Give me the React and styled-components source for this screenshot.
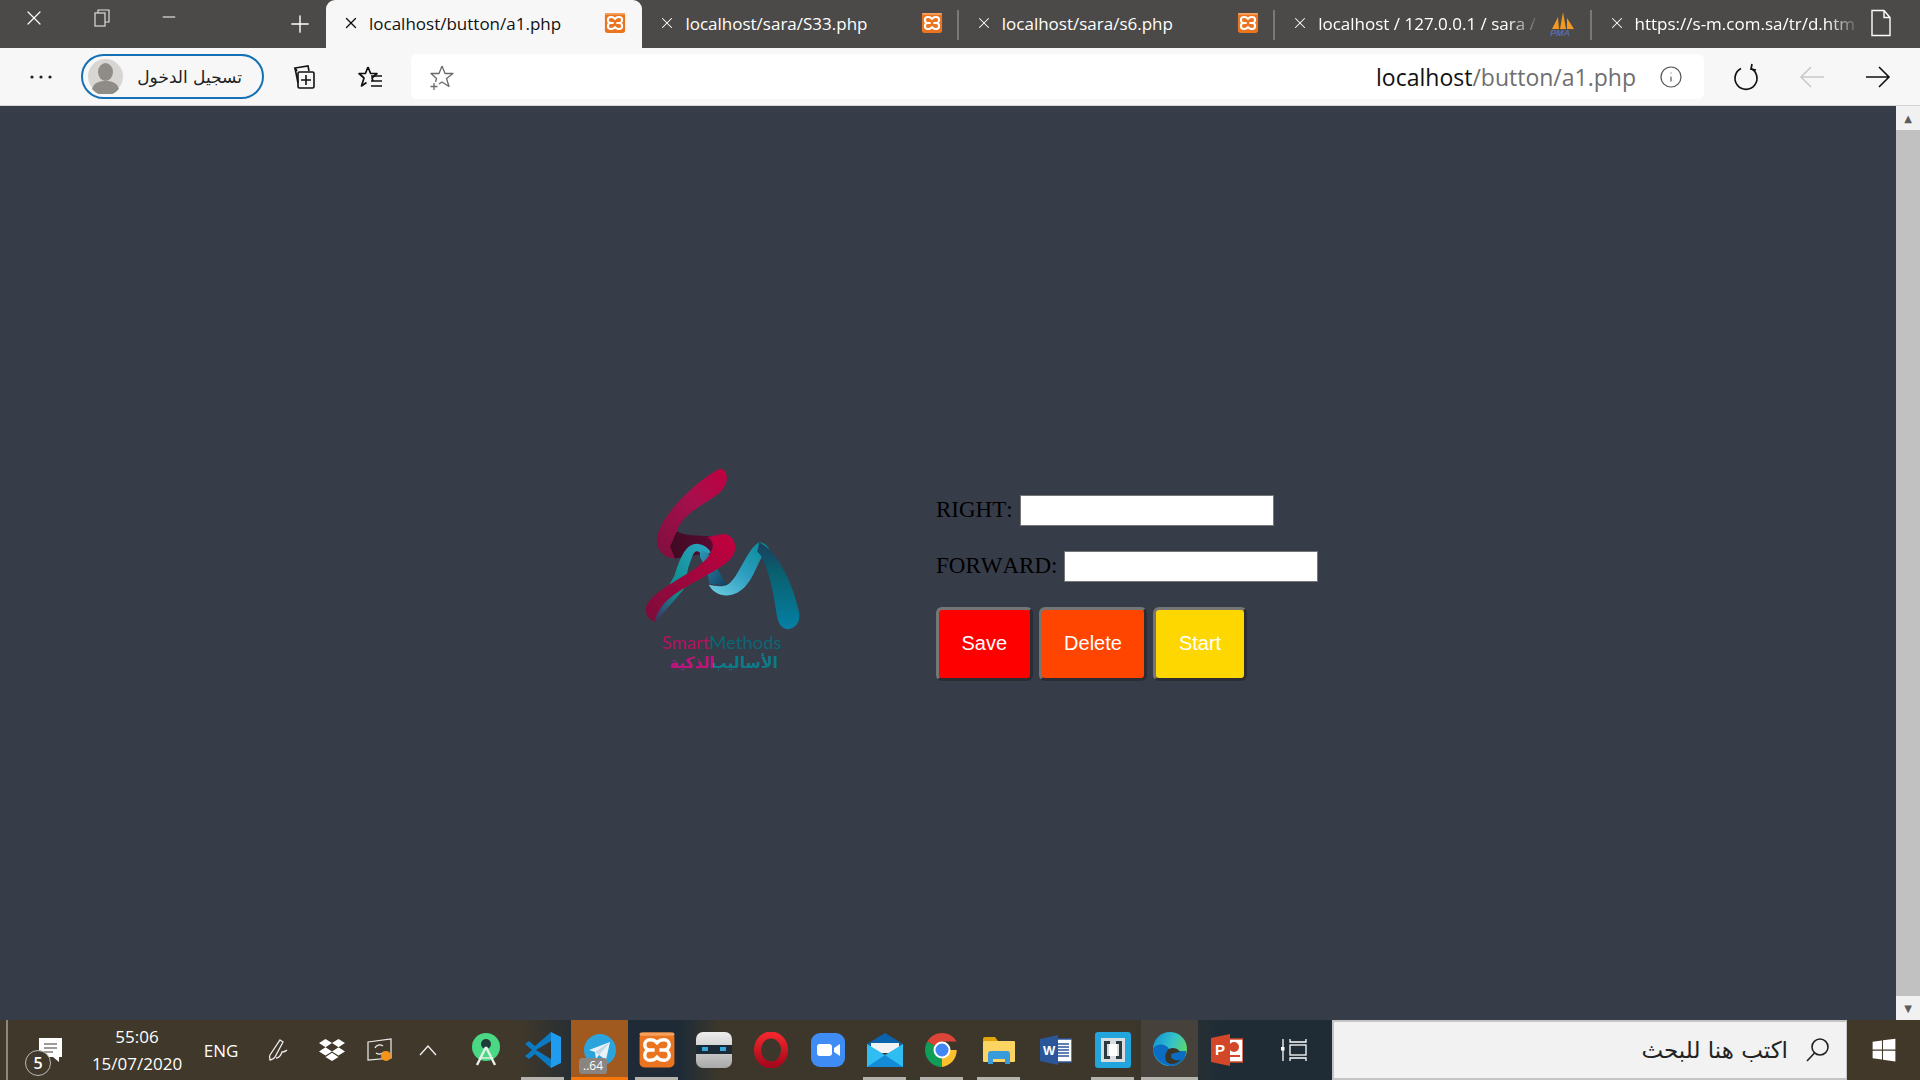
import React from "react";
import styled, { createGlobalStyle } from "styled-components";
import { X, Plus, Minus, Info } from "lucide-react";
import { FaDropbox, FaWindows } from "react-icons/fa";

const GlobalStyle = createGlobalStyle`
  html, body {
    margin: 0;
    padding: 0;
    width: 1920px;
    height: 1080px;
    overflow: hidden;
    font-family: "Open Sans", "DejaVu Sans", sans-serif;
  }
`;

const Screen = styled.div`
  display: flex;
  flex-direction: column;
  width: 1920px;
  height: 1080px;
`;

/* tab strip */
const TabStrip = styled.div`
  display: flex;
  height: 48px;
  background: #4c4a48;
  color: #fff;
`;
const WindowControls = styled.div`
  display: flex;
  width: 326px;
`;
const WinButton = styled.div`
  display: flex;
  justify-content: center;
  padding-top: ${(p) => p.$top || 8}px;
  width: ${(p) => p.$w || 68}px;
  margin-left: ${(p) => p.$ml || 0}px;
  height: 48px;
  box-sizing: border-box;
`;
const Tab = styled.div`
  position: relative;
  display: flex;
  align-items: center;
  gap: 9px;
  width: 316.4px;
  height: 48px;
  box-sizing: border-box;
  padding: 0 16px 2px 16px;
  background: ${(p) => (p.$active ? "#f7f7f7" : "transparent")};
  color: ${(p) => (p.$active ? "#111" : "#fff")};
  border-radius: ${(p) => (p.$active ? "9px 9px 0 0" : "0")};
  &::after {
    content: "";
    display: ${(p) => (p.$sep ? "block" : "none")};
    position: absolute;
    right: 0;
    top: 10px;
    width: 2px;
    height: 30px;
    background: #7a7876;
  }
`;
const TabTitle = styled.span`
  flex: 1;
  overflow: hidden;
  white-space: nowrap;
  font-size: 17px;
  -webkit-mask-image: ${(p) =>
    p.$fade ? "linear-gradient(to right, #000 85%, transparent 100%)" : "none"};
`;

/* toolbar */
const Toolbar = styled.div`
  display: flex;
  align-items: center;
  height: 58px;
  box-sizing: border-box;
  background: #f7f7f7;
  border-bottom: 1px solid #d6d6d6;
`;
const ToolCell = styled.div`
  display: flex;
  align-items: center;
  justify-content: center;
  width: ${(p) => p.$w || 66}px;
  flex: none;
`;
const SignIn = styled.div`
  display: flex;
  align-items: center;
  justify-content: space-between;
  width: 183px;
  height: 45px;
  box-sizing: border-box;
  border: 2px solid #1571b5;
  border-radius: 23px;
  padding: 0 20px 0 5px;
  margin-right: 7px;
  flex: none;
`;
const SignInText = styled.span`
  font-family: "DejaVu Sans", sans-serif;
  font-size: 17px;
  color: #222;
`;
const Address = styled.div`
  display: flex;
  align-items: center;
  width: 1293px;
  height: 45px;
  box-sizing: border-box;
  background: #fff;
  border-radius: 6px;
  padding: 0 21px 0 17px;
  margin-right: 9px;
  flex: none;
`;
const UrlText = styled.div`
  margin-left: auto;
  margin-right: 23px;
  font-size: 23px;
  color: #6f6f6f;
  white-space: nowrap;
`;
const UrlHost = styled.span`
  color: #111;
`;

/* page */
const Main = styled.div`
  display: flex;
  flex: 1;
  min-height: 0;
`;
const Content = styled.div`
  display: flex;
  align-items: flex-start;
  flex: 1;
  background: #373c49;
  padding: 362px 0 0 644px;
`;
const Logo = styled.svg`
  width: 156px;
  height: 203px;
  flex: none;
`;
const Form = styled.div`
  display: flex;
  flex-direction: column;
  gap: 25px;
  margin: 27px 0 0 136px;
`;
const Field = styled.div`
  display: flex;
  align-items: center;
  gap: 7px;
  height: 31px;
`;
const Label = styled.label`
  font-family: "Liberation Serif", serif;
  font-size: 23px;
  font-kerning: none;
  color: #000;
  margin-top: -2px;
`;
const TextInput = styled.input`
  width: 254px;
  height: 31px;
  box-sizing: border-box;
  border: 1px solid #767676;
  background: #fff;
  padding: 0;
`;
const ButtonRow = styled.div`
  display: flex;
  gap: 6px;
`;
const ActionButton = styled.button`
  height: 74px;
  box-sizing: border-box;
  padding: 0 22.5px 2px;
  border: 3px solid;
  border-color: #767676 #2b2d33 #2b2d33 #767676;
  border-radius: 6px;
  background: ${(p) => p.$color};
  color: #fff;
  font-family: "Liberation Sans", sans-serif;
  font-size: 20px;
`;

/* scrollbar */
const Scrollbar = styled.div`
  display: flex;
  flex-direction: column;
  align-items: center;
  width: 24px;
  background: #f1f1f1;
`;
const ScrollArrow = styled.div`
  height: 24px;
  flex: none;
  display: flex;
  align-items: center;
  justify-content: center;
  color: #5c5c5c;
  font-size: 10px;
`;
const ScrollThumb = styled.div`
  flex: 1;
  width: 100%;
  background: #c1c1c1;
`;

/* taskbar */
const Taskbar = styled.div`
  display: flex;
  height: 60px;
  background: linear-gradient(
    to right,
    #40382b 0,
    #40382b 520px,
    #1e2b36 590px,
    #1e2b36 680px,
    #3d372b 720px,
    #3d372b 1130px,
    #1f2c36 1220px,
    #1f2c36 1332px
  );
  color: #fff;
`;
const Tray = styled.div`
  display: flex;
  width: 451px;
  flex: none;
  margin-left: 6px;
  border-left: 2px solid #8d887e;
  box-sizing: border-box;
`;
const TrayCell = styled.div`
  position: relative;
  display: flex;
  align-items: center;
  justify-content: center;
  width: ${(p) => p.$w}px;
  flex: none;
  margin-left: ${(p) => p.$ml || 0}px;
`;
const NotifyBadge = styled.div`
  position: absolute;
  left: 11px;
  top: 30px;
  width: 24px;
  height: 24px;
  border: 1px solid #bbb;
  border-radius: 50%;
  background: #40382b;
  display: flex;
  align-items: center;
  justify-content: center;
  font-size: 16px;
  font-weight: 600;
`;
const Clock = styled.div`
  display: flex;
  flex-direction: column;
  align-items: center;
  gap: 6px;
  font-size: 17px;
  line-height: 21px;
`;
const Lang = styled.span`
  font-size: 17px;
`;
const AppCell = styled.div`
  position: relative;
  display: flex;
  align-items: center;
  justify-content: center;
  width: ${(p) => p.$w || 57}px;
  flex: none;
  background: ${(p) => p.$bg || "transparent"};
  &::after {
    content: "";
    display: ${(p) => (p.$bar ? "block" : "none")};
    position: absolute;
    bottom: 0;
    left: ${(p) => (p.$full ? "0" : "7px")};
    right: ${(p) => (p.$full ? "0" : "7px")};
    height: 3px;
    background: ${(p) => p.$bar};
  }
`;
const TelegramBadge = styled.div`
  position: absolute;
  left: 8px;
  bottom: 6px;
  padding: 0 4px;
  border-radius: 3px;
  background: #8a8581;
  font-size: 12px;
  line-height: 16px;
`;
const SearchBox = styled.div`
  display: flex;
  align-items: center;
  justify-content: flex-end;
  gap: 17px;
  width: 515px;
  flex: none;
  box-sizing: border-box;
  padding: 0 15px 0 0;
  background: #f2f2f2;
  border: 2px solid #c4c4c4;
  border-right-width: 1px;
  color: #222;
`;
const SearchText = styled.span`
  font-family: "DejaVu Sans", sans-serif;
  font-size: 23px;
`;
const StartCell = styled.div`
  display: flex;
  align-items: center;
  justify-content: center;
  flex: 1;
  background: #41382a;
`;

/* drawings */
const Xampp = ({ size = 22 }) => (
  <svg width={size} height={size} viewBox="0 0 24 24" style={{ flex: "none" }}>
    <rect x="1" y="1" width="22" height="22" rx="3" fill="#ea7420" />
    <rect x="1" y="1" width="22" height="2" rx="1" fill="#f5a05c" />
    <path
      d="M11 6.500C10 5.500 9 5.500 7.500 5.500a3.250 3.250 0 0 0 0 6.500 3.250 3.250 0 0 0 0 6.500C9 18.500 10 18.500 11 17.500L12 16.500 13 17.500C14 18.500 15 18.500 16.500 18.500a3.250 3.250 0 0 0 0-6.500 3.250 3.250 0 0 0 0-6.500C15 5.500 14 5.500 13 6.500L12 7.500zM7.500 12h3M13.500 12h3"
      fill="none"
      stroke="#fff"
      strokeWidth="2.200"
    />
  </svg>
);
const Pma = () => (
  <svg width="26" height="28" viewBox="0 0 26 28" style={{ flex: "none" }}>
    <path d="M2 20 8 8l1 12zM10 20l3-17 3 17zM17 20l0-11 7 11z" fill="#f2991f" />
    <text x="0" y="27" fontSize="9" fontStyle="italic" fontWeight="700" fontFamily="Liberation Sans" fill="#5a6aa8">
      PMA
    </text>
  </svg>
);
const DocIcon = () => (
  <svg width="22" height="28" viewBox="0 0 22 28" fill="none" stroke="#fff" strokeWidth="1.400" style={{ flex: "none" }}>
    <path d="M2 1.500h12l6 7v18H2zM14 1.500v7h6" />
  </svg>
);
const Restore = () => (
  <svg width="16" height="18" viewBox="0 0 16 18" fill="none" stroke="#ddd" strokeWidth="1.200">
    <rect x="1" y="4" width="10" height="13" />
    <path d="M4 4V1h11v12h-4" />
  </svg>
);
const Dots = () => (
  <svg width="24" height="6" viewBox="0 0 24 6" fill="#222">
    <circle cx="3" cy="3" r="1.600" />
    <circle cx="12" cy="3" r="1.600" />
    <circle cx="21" cy="3" r="1.600" />
  </svg>
);
const Avatar = () => (
  <svg width="35" height="35" viewBox="0 0 35 35" style={{ flex: "none" }}>
    <circle cx="17.500" cy="17.500" r="17.500" fill="#d8d6d3" />
    <ellipse cx="17.500" cy="13" rx="7.500" ry="9" fill="#8f8c88" />
    <path d="M4 30c2-7 8-8 13.500-8S29 23 31 30a17.500 17.500 0 0 1-27 0z" fill="#8f8c88" />
  </svg>
);
const Collections = () => (
  <svg width="24" height="26" viewBox="0 0 24 26" fill="none" stroke="#111" strokeWidth="1.600">
    <path d="M5 7 3 4l13-2 1 5" />
    <path d="M3 4l3 15" />
    <rect x="6" y="8" width="16" height="16" rx="1.500" />
    <path d="M14 11v10M9 16h10" />
  </svg>
);
const Favorites = () => (
  <svg width="26" height="24" viewBox="0 0 26 24" fill="none" stroke="#111" strokeWidth="1.700">
    <path d="M11 2l2.600 6.500H20l-5 4.500 1 3M11 2 8.400 8.500H2l5 4.500-2.500 8 5-3.500" strokeLinejoin="round" />
    <path d="M14 11h11M14 16h11M14 21h11" />
  </svg>
);
const AddStar = () => (
  <svg width="26" height="26" viewBox="0 0 26 26" fill="none" stroke="#6a6a6a" strokeWidth="1.300" style={{ flex: "none" }}>
    <path d="M14 2l3 7.500h8l-6.500 5 2.500 8-7-4.500-3 2M14 2l-3 7.500H3l5.500 5-1 3.500" strokeLinejoin="round" />
    <path d="M6 19v7M2.500 22.500h7" />
  </svg>
);
const Reload = () => (
  <svg width="26" height="28" viewBox="0 0 26 28" fill="none" stroke="#111" strokeWidth="1.700">
    <path d="M8 5.500a11 11 0 1 0 10 0" />
    <path d="M19 1l-1 5 5 1" />
  </svg>
);
const Arrow = ({ color, flip }) => (
  <svg
    width="26"
    height="24"
    viewBox="0 0 26 24"
    fill="none"
    stroke={color}
    strokeWidth="1.600"
    style={{ transform: flip ? "scaleX(-1)" : "none" }}
  >
    <path d="M1 12h23M14 2l10 10-10 10" />
  </svg>
);
const Notes = () => (
  <svg width="26" height="26" viewBox="0 0 26 26">
    <path d="M2 1h23v19h-3v5l-6-5H2z" fill="#fff" />
    <path d="M7 7h13M7 11h13M7 15h9" stroke="#40382b" strokeWidth="1.200" />
  </svg>
);
const Pen = () => (
  <svg width="22" height="24" viewBox="0 0 22 24" fill="none" stroke="#eee" strokeWidth="1.300">
    <path d="M13 2l3 2-8 15c-1 2-5 3-5 3s-1-3 0-5zM9 20c3 0 5-3 6-6 2 0 4-1 5-2" />
  </svg>
);
const RemoteIcon = () => (
  <svg width="26" height="24" viewBox="0 0 26 24" fill="none" stroke="#eee" strokeWidth="1.200">
    <path d="M1 4l23-3v19l-23 2z" />
    <path d="M8 10c1-3 5-4 8-2M17 14c-2 2-5 3-8 1" />
    <circle cx="19" cy="18" r="5" fill="#f7931a" stroke="none" />
  </svg>
);
const Chevron = () => (
  <svg width="20" height="12" viewBox="0 0 20 12" fill="none" stroke="#eee" strokeWidth="1.400">
    <path d="M2 11l8-9 8 9" />
  </svg>
);
const AndroidStudio = () => (
  <svg width="30" height="34" viewBox="0 0 30 34">
    <circle cx="15" cy="14" r="14" fill="#4ad884" />
    <circle cx="15" cy="11" r="5" fill="#1f3a3a" />
    <path d="M15 14 6 32M15 14l9 18" stroke="#e8f0ea" strokeWidth="2.400" fill="none" />
    <path d="M8 25h14" stroke="#e8f0ea" strokeWidth="1.400" />
  </svg>
);
const VsCode = () => (
  <svg width="36" height="36" viewBox="0 0 36 36">
    <path d="M26 0l10 5v26l-10 5z" fill="#1f9cf0" />
    <path d="M26 0v9L11 18l15 9v9L10 22l-6 5-4-3 7-6-7-6 4-3 6 5z" fill="#0a7ac2" />
  </svg>
);
const Telegram = () => (
  <svg width="32" height="32" viewBox="0 0 32 32">
    <circle cx="16" cy="16" r="16" fill="#2ba3dd" />
    <path d="M5 16 26 8l-4 18-7-5-3 4-1-7z" fill="#e8f2f8" />
    <path d="M11 18 26 8 15 21z" fill="#c4d8e6" />
  </svg>
);
const Ninja = () => (
  <svg width="36" height="36" viewBox="0 0 36 36">
    <defs>
      <linearGradient id="ninjaFill" x1="0" y1="0" x2="0" y2="1">
        <stop offset="0" stopColor="#eeeeee" />
        <stop offset="1" stopColor="#a9a9a9" />
      </linearGradient>
    </defs>
    <rect width="36" height="36" rx="7" fill="url(#ninjaFill)" />
    <rect y="13" width="36" height="9" fill="#1b2a36" />
    <rect x="6" y="15" width="6" height="4" fill="#35a8dc" />
    <rect x="24" y="15" width="6" height="4" fill="#35a8dc" />
  </svg>
);
const Opera = () => (
  <svg width="36" height="36" viewBox="0 0 36 36">
    <defs>
      <linearGradient id="operaFill" x1="0" y1="0" x2="0" y2="1">
        <stop offset="0" stopColor="#f0262c" />
        <stop offset="1" stopColor="#a8081c" />
      </linearGradient>
    </defs>
    <ellipse cx="18" cy="18" rx="13.500" ry="15" fill="none" stroke="url(#operaFill)" strokeWidth="7" />
  </svg>
);
const ZoomApp = () => (
  <svg width="34" height="34" viewBox="0 0 34 34">
    <rect width="34" height="34" rx="9" fill="#3f8cf5" />
    <rect x="6" y="11" width="15" height="12" rx="3" fill="#fff" />
    <path d="M23 15l6-4v12l-6-4z" fill="#fff" />
  </svg>
);
const Mail = () => (
  <svg width="36" height="34" viewBox="0 0 36 34">
    <path d="M0 11 18 0l18 11v3H0z" fill="#0b62ad" />
    <path d="M4 10h28v10H4z" fill="#f2f2f2" />
    <path d="M0 11l18 11 18-11v23H0z" fill="#2fbdf2" />
    <path d="M0 34l18-12 18 12z" fill="#158bd8" />
  </svg>
);
const Chrome = () => (
  <svg width="34" height="34" viewBox="0 0 34 34">
    <path d="M17 17 2.300 8.500A17 17 0 0 1 31.700 8.500H17z" fill="#db4437" />
    <path d="M17 17H31.700A17 17 0 0 1 17 34z" fill="#fbc02d" />
    <path d="M17 17v17A17 17 0 0 1 2.300 8.500z" fill="#0f9d58" />
    <circle cx="17" cy="17" r="7.500" fill="#4285f4" stroke="#fff" strokeWidth="2" />
  </svg>
);
const Explorer = () => (
  <svg width="32" height="27" viewBox="0 0 32 27">
    <path d="M0 2a2 2 0 0 1 2-2h10l3 4H0z" fill="#e2a40c" />
    <rect y="4" width="32" height="21" rx="1" fill="#fcd462" />
    <path d="M5 27V17a3 3 0 0 1 3-3h16a3 3 0 0 1 3 3v10h-5v-5H10v5z" fill="#3a9bdc" />
  </svg>
);
const Word = () => (
  <svg width="32" height="30" viewBox="0 0 32 30">
    <rect x="14" y="4" width="18" height="23" fill="#fff" stroke="#2b579a" strokeWidth="1.500" />
    <path d="M18 9h11M18 12h11M18 15h11M18 18h11M18 21h11" stroke="#2b579a" strokeWidth="1.400" />
    <path d="M0 4 18 0v30L0 26z" fill="#2b579a" />
    <text x="3" y="20" fontSize="13" fontWeight="700" fontFamily="Liberation Sans" fill="#fff">W</text>
  </svg>
);
const Brackets = () => (
  <svg width="36" height="36" viewBox="0 0 36 36">
    <rect width="36" height="36" rx="3" fill="#22a4dc" />
    <rect x="6" y="6" width="24" height="24" fill="#d9dde0" />
    <path d="M15 9H9v18h6v-3h-3V12h3zM21 9h6v18h-6v-3h3V12h-3z" fill="#2c3a42" />
    <rect x="14" y="12" width="8" height="12" fill="#fff" />
  </svg>
);
const Edge = () => (
  <svg width="36" height="36" viewBox="0 0 36 36">
    <defs>
      <linearGradient id="edgeFill" x1="0" y1="0" x2="1" y2="0.400">
        <stop offset="0" stopColor="#0c8fd8" />
        <stop offset="0.600" stopColor="#35c2c9" />
        <stop offset="1" stopColor="#5ad66e" />
      </linearGradient>
    </defs>
    <circle cx="18" cy="17" r="17" fill="url(#edgeFill)" />
    <path d="M1 17c3-6 13-6 16 0 1 3 6 3 10 2l7 0c0 4-1 7-4 10-5 5-12 6-16 4C7 31 2 25 1 17z" fill="#0b6cc4" />
    <path d="M15 19c3-5 11-3 13 1-6 1-9 1-9 4s4 5 10 4c-6 5-12 5-15 1-1-3-1-7 1-10z" fill="#383528" />
  </svg>
);
const Powerpoint = () => (
  <svg width="32" height="32" viewBox="0 0 32 32">
    <rect x="14" y="5" width="18" height="23" fill="#fff" stroke="#d2472a" strokeWidth="1.500" />
    <circle cx="23" cy="13" r="5" fill="#d2472a" />
    <path d="M18 22h11" stroke="#d2472a" strokeWidth="2" />
    <path d="M0 4 19 0v32L0 28z" fill="#d2472a" />
    <text x="4" y="21" fontSize="15" fontWeight="700" fontFamily="Liberation Sans" fill="#fff">P</text>
  </svg>
);
const TaskView = () => (
  <svg width="26" height="24" viewBox="0 0 26 24" fill="none" stroke="#fff" strokeWidth="1.300">
    <path d="M2 1v22" />
    <rect x="0" y="9" width="3.500" height="3.500" fill="#fff" stroke="none" />
    <path d="M9 1v3h16V1M9 23v-3h16v3" />
    <rect x="9" y="7" width="16" height="10" />
  </svg>
);
const SearchIcon = () => (
  <svg width="26" height="26" viewBox="0 0 26 26" fill="none" stroke="#222" strokeWidth="1.600">
    <circle cx="15" cy="10" r="8" />
    <path d="M9.500 16 2 24" />
  </svg>
);

const SmartMethodsLogo = () => (
  <Logo viewBox="72 54 468 610">
    <defs>
      <linearGradient id="redBand" x1="0" y1="1" x2="1" y2="0">
        <stop offset="0" stopColor="#7d0f3d" />
        <stop offset="0.600" stopColor="#a80f4c" />
        <stop offset="1" stopColor="#c0003f" />
      </linearGradient>
      <linearGradient id="redLower" x1="0" y1="1" x2="1" y2="0">
        <stop offset="0" stopColor="#7b0d3b" />
        <stop offset="1" stopColor="#c4003f" />
      </linearGradient>
      <linearGradient id="foldDark" x1="0" y1="0" x2="1" y2="0">
        <stop offset="0" stopColor="#3e0a22" />
        <stop offset="1" stopColor="#5c0a33" />
      </linearGradient>
      <linearGradient id="tealStem" x1="0" y1="1" x2="1" y2="0">
        <stop offset="0" stopColor="#462a62" />
        <stop offset="0.400" stopColor="#0f8d8f" />
        <stop offset="1" stopColor="#2ba6c4" />
      </linearGradient>
      <linearGradient id="mRibbon" x1="0" y1="1" x2="1" y2="0">
        <stop offset="0" stopColor="#6fd0e2" />
        <stop offset="0.500" stopColor="#2e9dc0" />
        <stop offset="1" stopColor="#048a93" />
      </linearGradient>
      <linearGradient id="mLeg" x1="0" y1="0" x2="0" y2="1">
        <stop offset="0" stopColor="#1b3d5e" />
        <stop offset="0.350" stopColor="#09606f" />
        <stop offset="1" stopColor="#0580a4" />
      </linearGradient>
      <linearGradient id="mDip" x1="0" y1="0" x2="1" y2="1">
        <stop offset="0" stopColor="#2b97b5" />
        <stop offset="1" stopColor="#123f63" />
      </linearGradient>
    </defs>
    <path d="M170 245C205 262 250 255 290 262L272 308L165 326C148 318 141 304 146 290z" fill="url(#foldDark)" />
    <path d="M163 378C178 330 195 284 226 282C246 281 264 292 272 308L247 318C236 300 226 300 218 316L205 352L190 420C160 455 130 490 105 515C92 508 95 490 110 470z" fill="url(#tealStem)" />
    <path d="M240 306C254 298 268 310 280 338L322 408L268 402C266 372 250 340 240 322z" fill="url(#mDip)" />
    <path d="M266 405C290 410 310 412 325 403C355 385 385 290 418 278C432 276 442 288 448 298C420 310 410 370 380 405C350 445 290 450 266 405z" fill="url(#mRibbon)" />
    <path d="M418 278C470 300 520 400 538 490C542 525 520 540 498 538C478 532 472 510 468 480C458 410 440 330 412 306z" fill="url(#mLeg)" />
    <path d="M300 56C326 58 328 100 302 125C262 160 185 190 170 245L150 290L165 326C132 325 108 300 110 270C115 200 230 90 300 56z" fill="url(#redBand)" />
    <path d="M262 262C285 258 305 250 320 254C345 262 354 295 336 322C300 368 170 410 125 470C110 490 106 505 105 515C85 510 70 490 80 465C110 410 230 370 265 320C285 292 282 274 262 262z" fill="url(#redLower)" />
    <text x="125" y="597" fontFamily="Lato, sans-serif" fontWeight="400" fontSize="51" textLength="360" lengthAdjust="spacingAndGlyphs">
      <tspan fill="#b2125f">Smart</tspan>
      <tspan fill="#0b6675">Methods</tspan>
    </text>
    <text x="474" y="655" textAnchor="start" direction="rtl" fontFamily="DejaVu Sans, sans-serif" fontWeight="700" fontSize="47" fill="#0d7a88">
      الأساليب
    </text>
    <text x="284" y="655" textAnchor="start" direction="rtl" fontFamily="DejaVu Sans, sans-serif" fontWeight="700" fontSize="47" fill="#c3127a">
      الذكية
    </text>
  </Logo>
);

const App = () => {
  return (
    <Screen>
      <GlobalStyle />
      <TabStrip>
        <WindowControls>
          <WinButton $top={6}><X size={24} strokeWidth={1.2} /></WinButton>
          <WinButton $top={9}><Restore /></WinButton>
          <WinButton $top={7}><Minus size={20} strokeWidth={1.2} /></WinButton>
          <WinButton $w={52} $ml={71} $top={10}><Plus size={28} strokeWidth={1.2} /></WinButton>
        </WindowControls>
        <Tab $active>
          <X size={18} strokeWidth={1.8} style={{ flex: "none" }} />
          <TabTitle>localhost/button/a1.php</TabTitle>
          <Xampp />
        </Tab>
        <Tab $sep>
          <X size={18} strokeWidth={1.4} style={{ flex: "none" }} />
          <TabTitle>localhost/sara/S33.php</TabTitle>
          <Xampp />
        </Tab>
        <Tab $sep>
          <X size={18} strokeWidth={1.4} style={{ flex: "none" }} />
          <TabTitle>localhost/sara/s6.php</TabTitle>
          <Xampp />
        </Tab>
        <Tab $sep>
          <X size={18} strokeWidth={1.4} style={{ flex: "none" }} />
          <TabTitle $fade>localhost / 127.0.0.1 / sara /</TabTitle>
          <Pma />
        </Tab>
        <Tab>
          <X size={18} strokeWidth={1.4} style={{ flex: "none" }} />
          <TabTitle $fade>https://s-m.com.sa/tr/d.htm</TabTitle>
          <DocIcon />
        </Tab>
      </TabStrip>

      <Toolbar>
        <ToolCell $w={81}><Dots /></ToolCell>
        <SignIn>
          <Avatar />
          <SignInText dir="rtl">تسجيل الدخول</SignInText>
        </SignIn>
        <ToolCell><Collections /></ToolCell>
        <ToolCell><Favorites /></ToolCell>
        <ToolCell $w={8} />
        <Address>
          <AddStar />
          <UrlText><UrlHost>localhost</UrlHost>/button/a1.php</UrlText>
          <Info size={24} strokeWidth={1.2} color="#555" />
        </Address>
        <ToolCell><Reload /></ToolCell>
        <ToolCell><Arrow color="#c9c9c9" flip /></ToolCell>
        <ToolCell><Arrow color="#111" /></ToolCell>
      </Toolbar>

      <Main>
        <Content>
          <SmartMethodsLogo />
          <Form>
            <Field>
              <Label>RIGHT:</Label>
              <TextInput type="text" />
            </Field>
            <Field>
              <Label>FORWARD:</Label>
              <TextInput type="text" />
            </Field>
            <ButtonRow>
              <ActionButton $color="#ff0000">Save</ActionButton>
              <ActionButton $color="#ff4500">Delete</ActionButton>
              <ActionButton $color="#ffd700">Start</ActionButton>
            </ButtonRow>
          </Form>
        </Content>
        <Scrollbar>
          <ScrollArrow>▲</ScrollArrow>
          <ScrollThumb />
          <ScrollArrow>▼</ScrollArrow>
        </Scrollbar>
      </Main>

      <Taskbar>
        <Tray>
          <TrayCell $w={72} $ml={6}>
            <Notes />
            <NotifyBadge>5</NotifyBadge>
          </TrayCell>
          <TrayCell $w={102}>
            <Clock>
              <span>55:06</span>
              <span>15/07/2020</span>
            </Clock>
          </TrayCell>
          <TrayCell $w={66}><Lang>ENG</Lang></TrayCell>
          <TrayCell $w={48}><Pen /></TrayCell>
          <TrayCell $w={60}><FaDropbox size={26} color="#fff" /></TrayCell>
          <TrayCell $w={36}><RemoteIcon /></TrayCell>
          <TrayCell $w={59}><Chevron /></TrayCell>
        </Tray>
        <AppCell><AndroidStudio /></AppCell>
        <AppCell $bar="#b5b3ae"><VsCode /></AppCell>
        <AppCell $bg="#a05a1f" $bar="#f7760b" $full>
          <Telegram />
          <TelegramBadge>..64</TelegramBadge>
        </AppCell>
        <AppCell $bar="#b5b3ae"><Xampp size={38} /></AppCell>
        <AppCell><Ninja /></AppCell>
        <AppCell><Opera /></AppCell>
        <AppCell><ZoomApp /></AppCell>
        <AppCell $bar="#b5b3ae"><Mail /></AppCell>
        <AppCell $bar="#b5b3ae"><Chrome /></AppCell>
        <AppCell $bar="#b5b3ae"><Explorer /></AppCell>
        <AppCell><Word /></AppCell>
        <AppCell $bar="#b5b3ae"><Brackets /></AppCell>
        <AppCell $bg="#46413b" $bar="#b5b3ae" $full><Edge /></AppCell>
        <AppCell><Powerpoint /></AppCell>
        <AppCell $w={77}><TaskView /></AppCell>
        <SearchBox>
          <SearchText dir="rtl">اكتب هنا للبحث</SearchText>
          <SearchIcon />
        </SearchBox>
        <StartCell><FaWindows size={26} color="#fff" /></StartCell>
      </Taskbar>
    </Screen>
  );
};

export default App;
